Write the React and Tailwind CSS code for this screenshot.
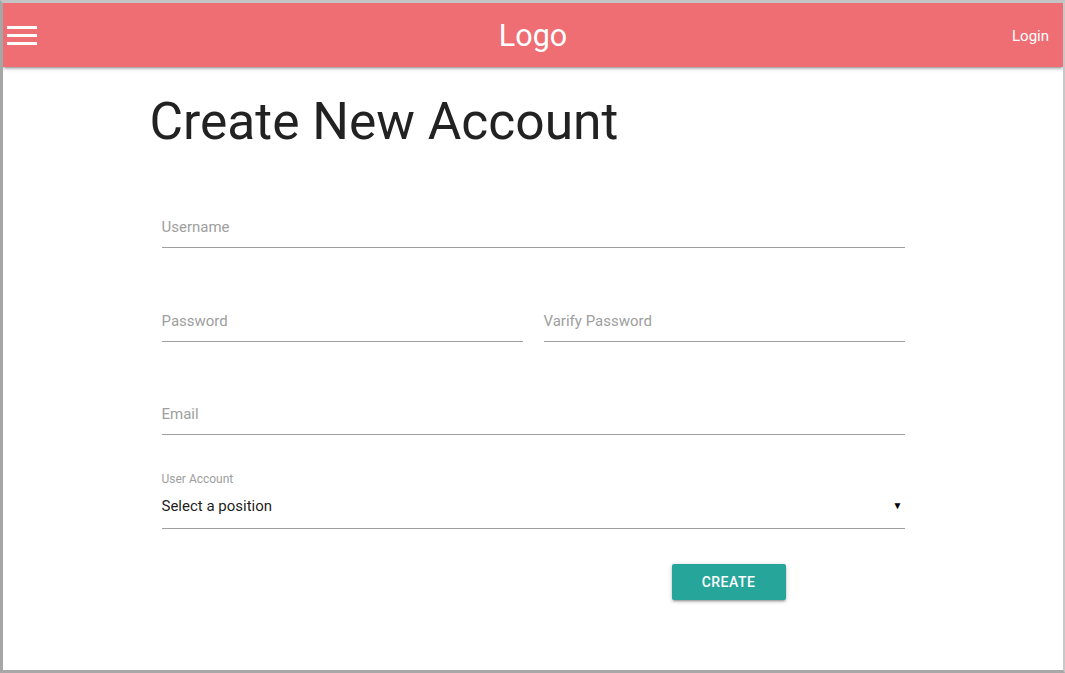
import React from "react";

/**
 * Signup page - navbar plus a simple account creation form
 */
function Field({ label }) {
  return (
    <div className="border-b border-[#9e9e9e] pb-[10px]">
      <div className="text-[15px] leading-[20px] text-[#9e9e9e]">{label}</div>
    </div>
  );
}

function Navbar() {
  return (
    <nav className="relative z-10 h-[64px] bg-[#ee6e73] flex items-center justify-between text-white shadow-[0_2px_2px_0_rgba(0,0,0,0.14),0_3px_1px_-2px_rgba(0,0,0,0.12),0_1px_5px_0_rgba(0,0,0,0.2)]">
      {/* hamburger */}
      <div className="w-[120px] pl-[4px] flex flex-col gap-[5px]">
        <span className="block w-[30px] h-[3px] bg-white"></span>
        <span className="block w-[30px] h-[3px] bg-white"></span>
        <span className="block w-[30px] h-[3px] bg-white"></span>
      </div>
      <div className="text-[30.5px] leading-none pt-[2px]">Logo</div>
      <div className="w-[120px] flex justify-end pr-[14px] pt-[2px] text-[15px]">Login</div>
    </nav>
  );
}

export default function App() {
  return (
    <div
      className="w-[1065px] h-[673px] bg-white border-t-[3px] border-l-[3px] border-r-2 border-b-[3px] border-t-[#c4c4c4] border-l-[#a6a6a6] border-r-[#c8c8c8] border-b-[#a8a8a8] overflow-hidden"
      style={{ fontFamily: "Roboto, 'Noto Sans', sans-serif" }}
    >
      <Navbar />
      <main className="w-[743px] mx-auto">
        <h2 className="h-[86px] pt-[27px] -ml-[12px] text-[51.5px] leading-[1.1] font-normal text-[#222]">
          Create New Account
        </h2>
        <form className="mt-[64px] flex flex-col">
          <Field label="Username" />
          <div className="mt-[63px] grid grid-cols-2 gap-[21px]">
            <Field label="Password" />
            <Field label="Varify Password" />
          </div>
          <div className="mt-[62px]">
            <Field label="Email" />
          </div>
          <div className="mt-[37px]">
            <div className="text-[12px] leading-[14px] text-[#9e9e9e]">User Account</div>
            <div className="mt-[10px] border-b border-[#9e9e9e] pb-[12px] flex items-center justify-between">
              <span className="text-[15px] leading-[20px] text-black/90">Select a position</span>
              <span className="text-[10px] leading-none text-black pr-[2px]">▼</span>
            </div>
          </div>
          <div className="mt-[35px] pl-[510px]">
            <button
              type="button"
              className="w-[114px] h-[36px] rounded-[2px] bg-[#26a69a] text-white text-[14px] font-medium tracking-[0.5px] uppercase shadow-[0_2px_2px_0_rgba(0,0,0,0.14),0_3px_1px_-2px_rgba(0,0,0,0.12),0_1px_5px_0_rgba(0,0,0,0.2)]"
            >
              Create
            </button>
          </div>
        </form>
      </main>
    </div>
  );
}
